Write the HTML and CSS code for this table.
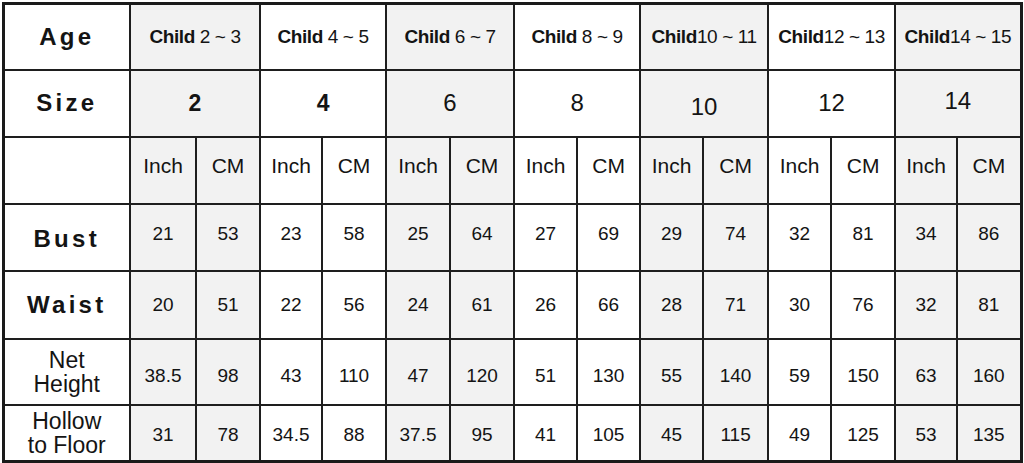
FILE: index.html
```html
<!DOCTYPE html>
<html lang="en">
<head>
<meta charset="utf-8">
<title>Size Chart</title>
<link rel="stylesheet" href="styles.css">
</head>
<body>
<table class="chart">
  <colgroup>
    <col class="c-label">
    <col class="c66"><col class="c64">
    <col class="c62"><col class="c64">
    <col class="c64"><col class="c64">
    <col class="c63"><col class="c63">
    <col class="c63"><col class="c65">
    <col class="c63"><col class="c64">
    <col class="c62"><col class="c64">
  </colgroup>
  <tr class="r-age">
    <th class="lbl">Age</th>
    <td colspan="2" class="g age"><b>Child</b> 2 ~ 3</td>
    <td colspan="2" class="age"><b>Child</b> 4 ~ 5</td>
    <td colspan="2" class="g age"><b>Child</b> 6 ~ 7</td>
    <td colspan="2" class="age"><b>Child</b> 8 ~ 9</td>
    <td colspan="2" class="g age"><b>Child</b>10 ~ 11</td>
    <td colspan="2" class="age"><b>Child</b>12 ~ 13</td>
    <td colspan="2" class="g age"><b>Child</b>14 ~ 15</td>
  </tr>
  <tr class="r-size">
    <th class="lbl">Size</th>
    <td colspan="2" class="g size bold">2</td>
    <td colspan="2" class="size bold">4</td>
    <td colspan="2" class="g size">6</td>
    <td colspan="2" class="size">8</td>
    <td colspan="2" class="g size low">10</td>
    <td colspan="2" class="size">12</td>
    <td colspan="2" class="g size high">14</td>
  </tr>
  <tr class="r-unit">
    <th class="lbl"></th>
    <td class="g unit">Inch</td><td class="g unit">CM</td>
    <td class="unit">Inch</td><td class="unit">CM</td>
    <td class="g unit">Inch</td><td class="g unit">CM</td>
    <td class="unit">Inch</td><td class="unit">CM</td>
    <td class="g unit">Inch</td><td class="g unit">CM</td>
    <td class="unit">Inch</td><td class="unit">CM</td>
    <td class="g unit">Inch</td><td class="g unit">CM</td>
  </tr>
  <tr class="r-bust">
    <th class="lbl">Bust</th>
    <td class="g num">21</td><td class="g num">53</td>
    <td class="num">23</td><td class="num">58</td>
    <td class="g num">25</td><td class="g num">64</td>
    <td class="num">27</td><td class="num">69</td>
    <td class="g num">29</td><td class="g num">74</td>
    <td class="num">32</td><td class="num">81</td>
    <td class="g num">34</td><td class="g num">86</td>
  </tr>
  <tr class="r-waist">
    <th class="lbl">Waist</th>
    <td class="g num">20</td><td class="g num">51</td>
    <td class="num">22</td><td class="num">56</td>
    <td class="g num">24</td><td class="g num">61</td>
    <td class="num">26</td><td class="num">66</td>
    <td class="g num">28</td><td class="g num">71</td>
    <td class="num">30</td><td class="num">76</td>
    <td class="g num">32</td><td class="g num">81</td>
  </tr>
  <tr class="r-height">
    <th class="lbl2">Net<br>Height</th>
    <td class="g num">38.5</td><td class="g num">98</td>
    <td class="num">43</td><td class="num">110</td>
    <td class="g num">47</td><td class="g num">120</td>
    <td class="num">51</td><td class="num">130</td>
    <td class="g num">55</td><td class="g num">140</td>
    <td class="num">59</td><td class="num">150</td>
    <td class="g num">63</td><td class="g num">160</td>
  </tr>
  <tr class="r-hollow">
    <th class="lbl2">Hollow<br>to Floor</th>
    <td class="g num">31</td><td class="g num">78</td>
    <td class="num">34.5</td><td class="num">88</td>
    <td class="g num">37.5</td><td class="g num">95</td>
    <td class="num">41</td><td class="num">105</td>
    <td class="g num">45</td><td class="g num">115</td>
    <td class="num">49</td><td class="num">125</td>
    <td class="g num">53</td><td class="g num">135</td>
  </tr>
</table>
</body>
</html>
```

FILE: styles.css
```css
html, body {
  margin: 0;
  padding: 0;
  background: #ffffff;
}

body {
  font-family: "Liberation Sans", Arial, sans-serif;
  color: #141414;
}

.chart {
  border-collapse: collapse;
  table-layout: fixed;
  width: 1016px;
  margin: 2px 0 0 1.5px;
  border: 3px solid #1a1a1a;
}

.c-label { width: 127px; }
.c62 { width: 62px; }
.c63 { width: 63px; }
.c64 { width: 64px; }
.c65 { width: 65px; }
.c66 { width: 66px; }

.chart th,
.chart td {
  border: 2px solid #1e1e1e;
  padding: 0;
  text-align: center;
  vertical-align: middle;
  white-space: nowrap;
  overflow: hidden;
}

.r-age { height: 66px; }
.r-size { height: 67px; }
.r-unit { height: 67px; }
.r-bust { height: 67px; }
.r-waist { height: 68px; }
.r-height { height: 66px; }
.r-hollow { height: 57px; }

.g { background: #f2f2f2; }

.lbl {
  font-size: 24px;
  font-weight: 700;
  letter-spacing: 3.3px;
  background: #ffffff;
}

.chart .r-bust .lbl { padding-top: 4px; }

.lbl2 {
  font-size: 23px;
  font-weight: 400;
  line-height: 24px;
  background: #ffffff;
}

.age {
  font-size: 19px;
  letter-spacing: -0.4px;
}

.age b { font-weight: 700; }

.size {
  font-size: 24px;
  font-weight: 400;
}

.size.bold { font-weight: 700; font-size: 23px; }
.chart .size.low { padding-top: 7px; }
.chart .size.high { padding-bottom: 4px; }

.unit {
  font-size: 21px;
}

.chart .unit { padding-bottom: 8px; }

.num {
  font-size: 19px;
}

.chart .r-bust .num { padding-bottom: 6px; }
.chart .r-height .num { padding-top: 8px; }
.chart .r-hollow .num { padding-top: 5px; }
```
